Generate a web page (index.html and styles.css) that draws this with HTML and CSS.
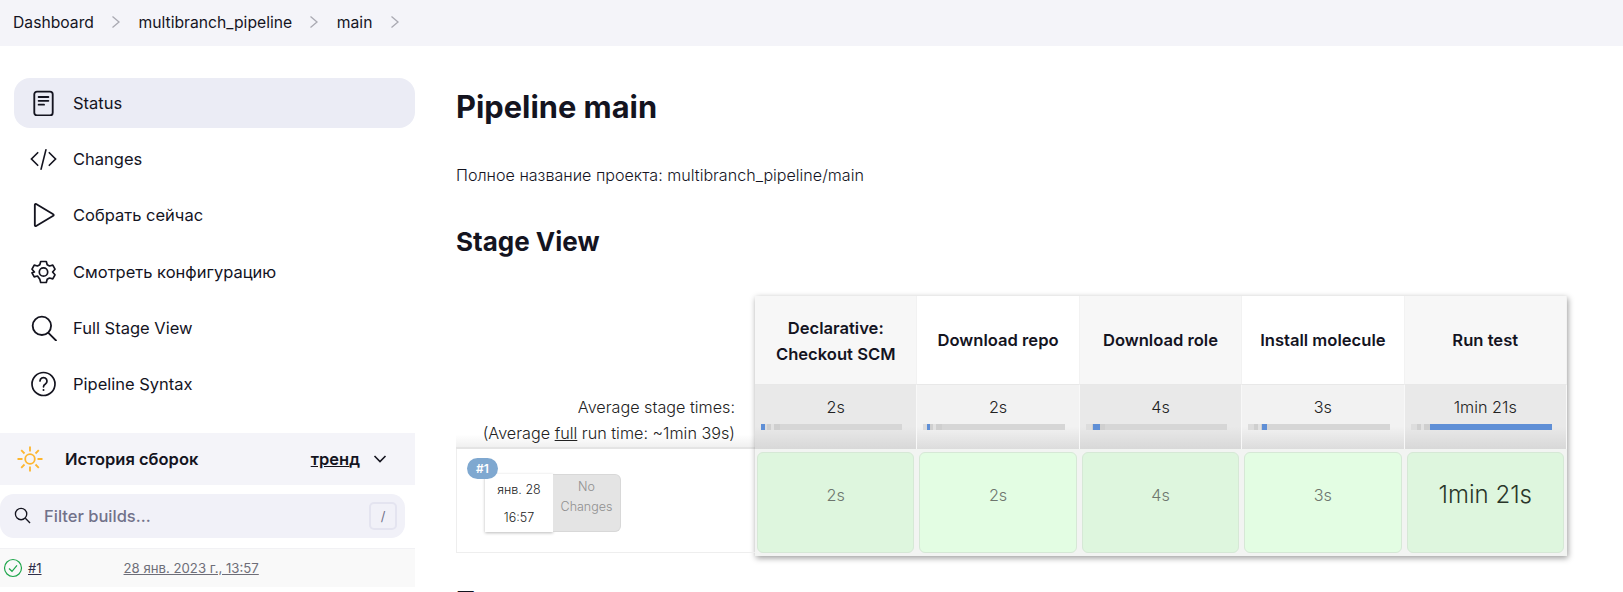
FILE: index.html
```html
<!DOCTYPE html>
<html lang="en">
<head>
    <meta charset="UTF-8">
    <title>main [multibranch_pipeline]</title>
    <link rel="stylesheet" href="styles.css">
</head>
<body>
<nav class="breadcrumbs">
    <a class="crumb">Dashboard</a>
    <svg class="chevron" viewBox="0 0 10 14"><path d="M1.5 1.5 8 7l-6.5 5.500"/></svg>
    <a class="crumb">multibranch_pipeline</a>
    <svg class="chevron" viewBox="0 0 10 14"><path d="M1.5 1.5 8 7l-6.5 5.500"/></svg>
    <a class="crumb">main</a>
    <svg class="chevron" viewBox="0 0 10 14"><path d="M1.5 1.500 8 7l-6.5 5.500"/></svg>
</nav>
<div class="page">
    <aside class="sidebar">
        <ul class="tasks">
            <li class="task task-active">
                <svg class="task-icon" viewBox="0 0 24 24"><rect x="3.500" y="1.500" width="17" height="22" rx="2.500"/><path d="M7.500 6.500h9M7.500 10h9M7.500 13.500h5"/></svg>
                Status
            </li>
            <li class="task">
                <svg class="task-icon" viewBox="0 0 28 24"><path d="M8 5.500 1.500 12 8 18.500M20 5.500l6.500 6.500L20 18.500M16.500 2.500l-5 20"/></svg>
                Changes
            </li>
            <li class="task">
                <svg class="task-icon" viewBox="0 0 24 24"><path d="M4 2.500v19a.8.8 0 0 0 1.200.7L21 12.700a.8.8 0 0 0 0-1.400L5.200 1.800A.8.8 0 0 0 4 2.500z"/></svg>
                Собрать сейчас
            </li>
            <li class="task">
                <svg class="task-icon" viewBox="0 0 26 26"><circle cx="13" cy="13" r="4.200"/><path d="M10.200 2.500h5.600l.9 3.200 2.300 1.300 3.300-.8 2.200 4-2.400 2.800 2.400 2.800-2.200 4-3.300-.8-2.300 1.300-.9 3.200h-5.600l-.9-3.200L7 17l-3.300.8-2.200-4L3.900 13 1.500 10.200l2.200-4 3.300.8 2.300-1.300z" stroke-linejoin="round"/></svg>
                Смотреть конфигурацию
            </li>
            <li class="task">
                <svg class="task-icon" viewBox="0 0 24 24"><circle cx="10.500" cy="10" r="8.500"/><path d="m16.500 16.500 7 7"/></svg>
                Full Stage View
            </li>
            <li class="task">
                <svg class="task-icon" viewBox="0 0 26 26"><circle cx="13" cy="13" r="11.500"/><path d="M9.500 10a3.500 3.500 0 1 1 5.400 3c-1.300.8-1.900 1.500-1.900 2.800"/><circle class="dot" cx="13" cy="19" r="1"/></svg>
                Pipeline Syntax
            </li>
        </ul>
        <section class="history">
            <header class="history-head">
                <svg class="sun" viewBox="0 0 28 28"><circle cx="14" cy="14" r="4.800"/><path d="M14 1.500v5M14 21.500v5M1.500 14h5M21.500 14h5M5.200 5.200l3.300 3.300M19.500 19.500l3.300 3.300M5.200 22.800l3.300-3.300M19.500 8.500l3.300-3.300"/></svg>
                <span class="history-title">История сборок</span>
                <span class="trend"><u>трен</u>д</span>
                <svg class="trend-arrow" viewBox="0 0 14 8"><path d="m1.500 1 5.500 5.500L12.500 1"/></svg>
            </header>
            <div class="filter">
                <svg class="filter-icon" viewBox="0 0 18 18"><circle cx="7.500" cy="7.500" r="6"/><path d="m12 12 5 5"/></svg>
                <span class="filter-text">Filter builds...</span>
                <kbd class="filter-key">/</kbd>
            </div>
            <div class="build-row">
                <svg class="build-ok" viewBox="0 0 20 20"><circle cx="10" cy="10" r="8.500"/><path d="m6 10.500 3 2.800 5-6"/></svg>
                <a class="build-num">#1</a>
                <a class="build-date">28 янв. 2023 г., 13:57</a>
            </div>
        </section>
    </aside>
    <main class="content">
        <h1 class="title">Pipeline main</h1>
        <p class="full-name">Полное название проекта: multibranch_pipeline/main</p>
        <h2 class="subtitle">Stage View</h2>
        <div class="stage-view">
            <div class="builds">
                <div class="averages">
                    <div>Average stage times:</div>
                    <div>(Average <u>full</u> run time: ~1min 39s)</div>
                </div>
                <div class="build-card">
                    <span class="badge">#1</span>
                    <div class="build-when">
                        <div>янв. 28</div>
                        <div>16:57</div>
                    </div>
                    <div class="no-changes">No Changes</div>
                </div>
            </div>
            <div class="stages">
                <div class="stage-name shade">Declarative: Checkout SCM</div>
                <div class="stage-name">Download repo</div>
                <div class="stage-name shade">Download role</div>
                <div class="stage-name">Install molecule</div>
                <div class="stage-name shade">Run test</div>

                <div class="stage-avg shade">2s<div class="bar"><i style="margin-left:0;width:3%"></i></div></div>
                <div class="stage-avg">2s<div class="bar"><i style="margin-left:2.500%;width:2.500%"></i></div></div>
                <div class="stage-avg shade">4s<div class="bar"><i style="margin-left:5%;width:5%"></i></div></div>
                <div class="stage-avg">3s<div class="bar"><i style="margin-left:9.800%;width:3.700%"></i></div></div>
                <div class="stage-avg shade">1min 21s<div class="bar"><i style="margin-left:13.500%;width:86.500%"></i></div></div>

                <div class="stage-cell shade"><div class="result">2s</div></div>
                <div class="stage-cell"><div class="result">2s</div></div>
                <div class="stage-cell shade"><div class="result">4s</div></div>
                <div class="stage-cell"><div class="result">3s</div></div>
                <div class="stage-cell shade"><div class="result result-long">1min 21s</div></div>
            </div>
        </div>
        <h2 class="subtitle next">Постоянные ссылки</h2>
    </main>
</div>
</body>
</html>
```
FILE: styles.css
```css
html, body {
    margin: 0;
    padding: 0;
    height: 592px;
    overflow: hidden;
    background: #fff;
}
body {
    font-family: Inter, "Noto Sans", sans-serif;
    font-size: 16.500px;
    color: #14141f;
}
.breadcrumbs {
    display: flex;
    align-items: center;
    height: 46px;
    padding: 0 0 2px 13px;
    box-sizing: border-box;
    background: #f4f4f9;
}
.crumb {
    font-size: 15.700px;
}
.chevron {
    width: 10px;
    height: 14px;
    margin: 0 17.300px;
    fill: none;
    stroke: #a9a9b2;
    stroke-width: 1.300;
}
.page {
    display: flex;
}
.sidebar {
    width: 415px;
    flex: none;
    padding-top: 32px;
}
.tasks {
    list-style: none;
    margin: 0 0 0 14px;
    padding: 0;
}
.task {
    display: flex;
    align-items: center;
    height: 50px;
    margin-bottom: 6.200px;
    border-radius: 16px;
}
.task-active {
    background: #ebecf5;
}
.task-icon {
    width: 27px;
    height: 26px;
    margin: 0 16px 0 16px;
    fill: none;
    stroke: #14141f;
    stroke-width: 1.700;
    stroke-linecap: round;
}
.task-icon .dot {
    fill: #14141f;
    stroke: none;
}
.history {
    margin-top: 24px;
}
.history-head {
    display: flex;
    align-items: center;
    height: 52px;
    background: #f4f4f9;
}
.sun {
    width: 28px;
    height: 28px;
    margin-left: 16px;
    fill: none;
    stroke: #fdb62f;
    stroke-width: 1.800;
}
.history-title {
    margin-left: 21px;
    font-weight: 600;
}
.trend {
    margin-left: auto;
    font-weight: 600;
}
.trend-arrow {
    width: 14px;
    height: 8px;
    margin: 0 28px 0 13px;
    fill: none;
    stroke: #14141f;
    stroke-width: 1.600;
}
.filter {
    display: flex;
    align-items: center;
    width: 405px;
    height: 44px;
    margin-top: 9px;
    border-radius: 14px;
    background: #f1f1f8;
}
.filter-icon {
    width: 17px;
    height: 17px;
    margin: 0 13px 0 14px;
    fill: none;
    stroke: #14141f;
    stroke-width: 1.400;
}
.filter-text {
    flex: 1;
    font-size: 16.500px;
    font-weight: 500;
    color: #72728a;
}
.filter-key {
    width: 28px;
    height: 28px;
    margin-right: 8px;
    border: 2px solid #e4e4f0;
    border-radius: 5px;
    box-sizing: border-box;
    font: 13px/24px Inter, sans-serif;
    text-align: center;
    color: #72728a;
}
.build-row {
    display: flex;
    align-items: center;
    height: 39px;
    margin-top: 10px;
    background: #f9f9f9;
    border-top: 1px solid #f1f1f4;
    box-sizing: border-box;
}
.build-ok {
    width: 20px;
    height: 20px;
    margin-left: 3px;
    fill: none;
    stroke: #1ea64b;
    stroke-width: 1.200;
}
.build-num {
    margin-left: 5px;
    font-size: 13px;
    text-decoration: underline;
    color: #30304a;
}
.build-date {
    margin-left: 82px;
    font-size: 13.200px;
    text-decoration: underline;
    color: #6e6e78;
}
.content {
    flex: 1;
    padding-left: 41px;
}
.title {
    margin: 43px 0 0;
    font-size: 30.800px;
    line-height: 36px;
    font-weight: 700;
}
.full-name {
    margin: 40px 0 0;
    font-size: 16.100px;
    line-height: 20px;
    font-weight: 300;
}
.subtitle {
    margin: 41px 0 0;
    font-size: 26px;
    line-height: 32px;
    font-weight: 700;
}
.next {
    margin-top: 29px;
}
.stage-view {
    display: flex;
    margin-top: 38px;
}
.builds {
    width: 299px;
    flex: none;
    padding-top: 89px;
}
.averages {
    height: 64px;
    padding: 9px 20px 0 0;
    box-sizing: border-box;
    font-size: 16.200px;
    font-weight: 300;
    line-height: 26px;
    text-align: right;
    color: #222;
    background: linear-gradient(#fff 80%, #f0f0f0);
    border-bottom: 2px solid #e4e4e4;
}
.build-card {
    position: relative;
    display: flex;
    height: 104px;
    padding: 25px 0 0 28px;
    box-sizing: border-box;
    border: 1px solid #eee;
    border-top: 0;
    border-right: 0;
}
.badge {
    position: absolute;
    left: 10px;
    top: 9px;
    width: 31px;
    height: 21px;
    border-radius: 11px;
    background: #7fa8d0;
    color: #fff;
    font-size: 12px;
    font-weight: 600;
    line-height: 21px;
    text-align: center;
}
.build-when {
    width: 68px;
    height: 58px;
    padding-top: 2px;
    box-sizing: border-box;
    background: #fff;
    box-shadow: 0 1px 3px #bbb;
    font-size: 12.500px;
    font-weight: 300;
    line-height: 28px;
    text-align: center;
    color: #222;
}
.no-changes {
    width: 68px;
    height: 58px;
    padding-top: 2px;
    box-sizing: border-box;
    background: #e4e4e4;
    border: 1px solid #d8d8d8;
    border-left: 0;
    border-radius: 0 6px 6px 0;
    font-size: 12.500px;
    font-weight: 300;
    line-height: 20px;
    text-align: center;
    color: #909090;
}
.stages {
    display: grid;
    grid-template-columns: repeat(5, 162.400px);
    grid-template-rows: 89px 64px 107px;
    box-shadow: 1px 2px 6px rgba(0, 0, 0, 0.4);
}
.stage-name {
    display: flex;
    align-items: center;
    justify-content: center;
    padding: 0 8px;
    text-align: center;
    font-size: 16.600px;
    line-height: 26px;
    font-weight: 600;
    background: #fff;
    border-right: 1px solid #f2f2f2;
    border-bottom: 1px solid #e8e8e8;
}
.stage-name.shade {
    background: #f7f7f7;
}
.stage-name:first-child {
    padding: 2px 18px 0;
}
.stage-avg {
    padding-top: 11px;
    box-sizing: border-box;
    text-align: center;
    font-size: 16.200px;
    font-weight: 300;
    line-height: 22px;
    color: #222;
    background: linear-gradient(#f2f2f2 65%, #dcdcdc);
    border-right: 1px solid #f8f8f8;
}
.stage-avg.shade {
    background: linear-gradient(#e9e9e9 65%, #d8d8d8);
}
.bar {
    display: flex;
    height: 6px;
    margin: 6px 14px 0 6px;
    background: linear-gradient(90deg, #ddd 0 4%, #cfcfcf 4% 7%, #e2e2e2 7% 9%, #cfcfcf 9% 13.500%, transparent 13.500%), #d6d6d6;
}
.bar i {
    display: block;
    height: 6px;
    background: #5f8fd6;
}
.stage-cell {
    padding: 3px 3px 3px 2px;
    background: #f2f4f2;
}
.result {
    display: flex;
    align-items: center;
    justify-content: center;
    height: 100%;
    box-sizing: border-box;
    padding-bottom: 16px;
    border: 1px solid #d6e8d6;
    border-radius: 6px;
    background: #e3fde3;
    font-size: 16.200px;
    font-weight: 300;
    color: #6e766e;
}
.shade .result {
    background: #def6de;
}
.result-long {
    font-size: 24px;
    color: #2a362a;
}
```
